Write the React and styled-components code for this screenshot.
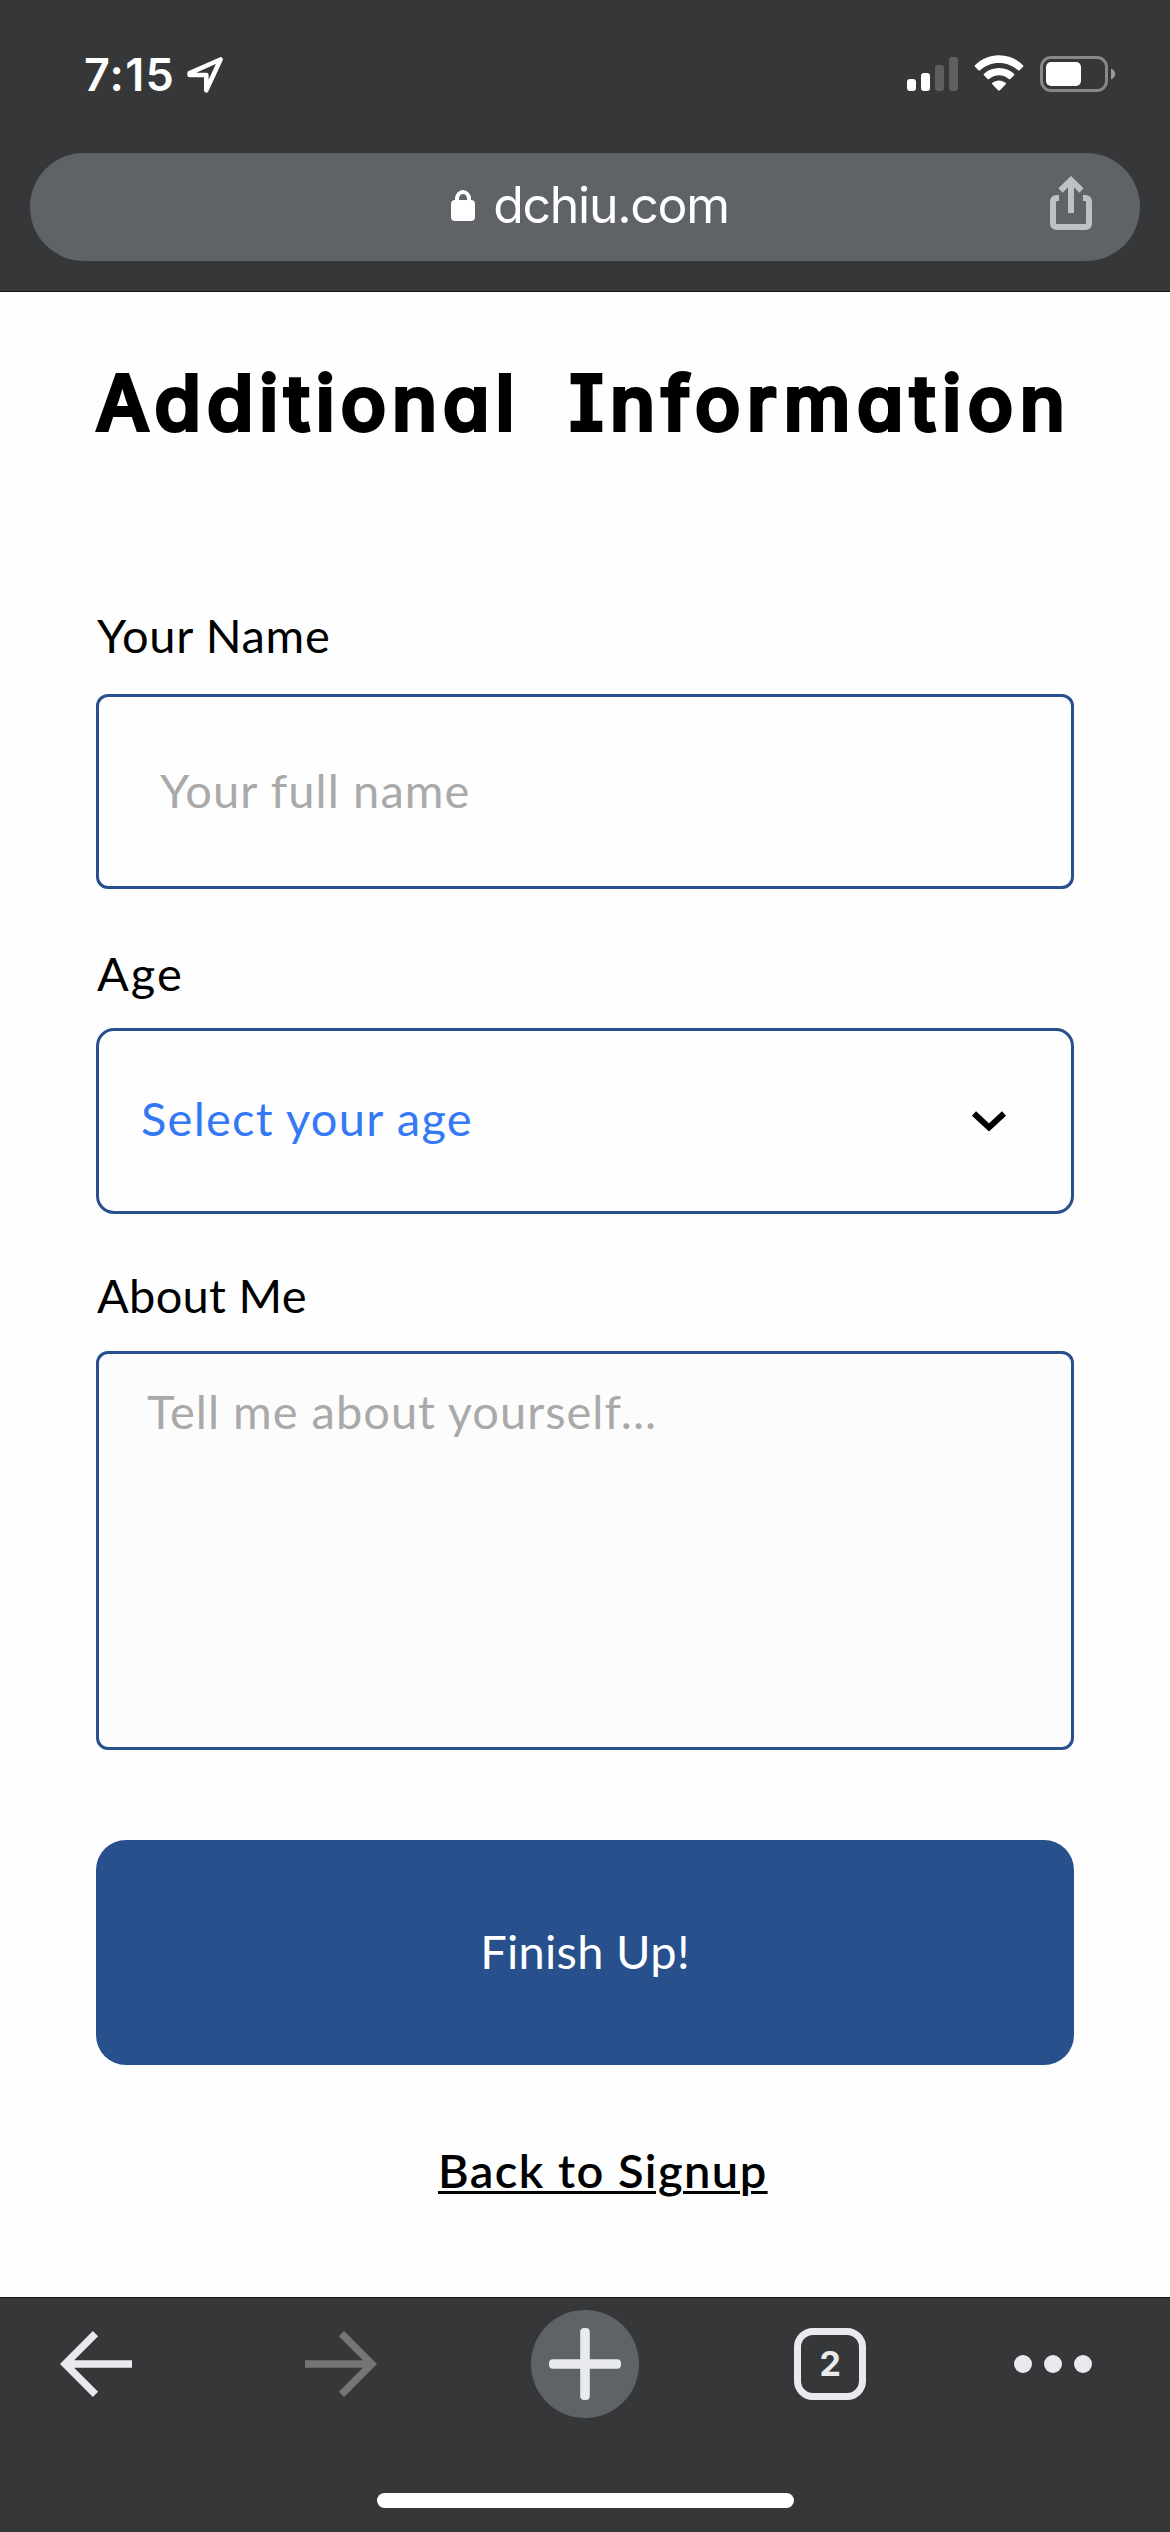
import React from 'react';
import styled, { createGlobalStyle } from 'styled-components';

const Global = createGlobalStyle`
  * { box-sizing: border-box; }
  body { margin: 0; background: #fefefe; }
`;

const bar = '#363739';
const navy = '#27508d';
const body = "Lato, 'Open Sans', sans-serif";
const ui = "Inter, 'Liberation Sans', sans-serif";

const Screen = styled.div`
  display: flex;
  flex-direction: column;
  width: 1170px;
  height: 2532px;
  background: #fefefe;
  color: #000;
  overflow: hidden;
`;

const Header = styled.header`
  flex: none;
  height: 292px;
  background: ${bar};
  border-bottom: 1px solid #17181a;
`;

const StatusBar = styled.div`
  display: flex;
  justify-content: space-between;
  height: 153px;
  padding: 46px 54px 0 84px;
`;

const Clock = styled.div`
  display: flex;
  align-items: center;
  height: 56px;
  font: 600 45px/56px ${ui};
  letter-spacing: 1.2px;
  color: #fff;
`;

const ClockText = styled.span`
  width: 102px;
  padding-top: 1px;
`;

const StatusIcons = styled.div`
  display: flex;
  align-items: center;
  height: 56px;
`;

const AddressPill = styled.div`
  display: grid;
  grid-template-columns: 1fr auto 1fr;
  align-items: center;
  height: 108px;
  margin: 0 30px;
  padding: 0 48px 0 54px;
  border-radius: 54px;
  background: #5f6267;
`;

const Address = styled.div`
  grid-column: 2;
  display: flex;
  align-items: center;
  gap: 18px;
  padding: 0 0 4px 4px;
  font: 400 50px/60px ${ui};
  letter-spacing: -1.3px;
  color: #fff;
`;

const ShareSlot = styled.div`
  display: flex;
  justify-content: flex-end;
  padding-bottom: 8px;
`;

const Main = styled.main`
  flex: 1;
  display: flex;
  flex-direction: column;
  padding: 63px 96px 0;
`;

const Title = styled.h1`
  display: flex;
  justify-content: space-between;
  height: 96px;
  margin: 0 0 154px;
  padding-right: 9px;
  font: 500 75px/96px ${ui};
  font-feature-settings: 'cv11', 'cv08', 'calt' 0;
  -webkit-text-stroke: 4px #000;
  stroke-linejoin: round;
`;

const Word = styled.span`
  letter-spacing: ${(p) => p.$track};
  margin-right: calc(-1 * ${(p) => p.$track});
`;

const Field = styled.div`
  display: flex;
  flex-direction: column;
  gap: ${(p) => p.$gap}px;
  margin-bottom: ${(p) => p.$after}px;
`;

const Label = styled.label`
  height: 60px;
  padding-left: 1px;
  font: 400 47px/60px ${body};
  letter-spacing: ${(p) => p.$track || '0px'};
`;

const TextInput = styled.input`
  height: 195px;
  padding: 0 58px 4px 61px;
  border: 3px solid ${navy};
  border-radius: 12px;
  background: transparent;
  outline: none;
  font: 400 47px/60px ${body};
  letter-spacing: 1.1px;
  &::placeholder { color: #a9a9a9; opacity: 1; }
`;

const Select = styled.button`
  display: flex;
  align-items: center;
  justify-content: space-between;
  height: 186px;
  padding: 0 64px 0 42px;
  border: 3px solid ${navy};
  border-radius: 18px;
  background: transparent;
  font: 400 47px/60px ${body};
  letter-spacing: 1.25px;
  color: #3478f6;
`;

const SelectValue = styled.span`
  padding-bottom: 6px;
`;

const TextArea = styled.textarea`
  height: 399px;
  padding: 27px 48px;
  border: 3px solid ${navy};
  border-radius: 12px;
  background: #fcfcfc;
  outline: none;
  resize: none;
  font: 400 47px/60px ${body};
  letter-spacing: 1px;
  &::placeholder { color: #a9a9a9; opacity: 1; }
`;

const Submit = styled.button`
  height: 225px;
  padding: 0 0 3px;
  border: 0;
  border-radius: 30px;
  background: ${navy};
  font: 400 47px/60px ${body};
  letter-spacing: 0.3px;
  color: #fff;
`;

const BackLink = styled.a`
  align-self: flex-start;
  margin: 75px 0 0 342px;
  font: 600 47px/60px ${body};
  letter-spacing: 1.45px;
  text-decoration: underline;
  text-decoration-thickness: 3px;
  text-underline-offset: 3px;
  color: #000;
`;

const Footer = styled.footer`
  flex: none;
  display: flex;
  flex-direction: column;
  align-items: center;
  justify-content: space-between;
  height: 235px;
  padding: 12px 0 24px;
  border-top: 1px solid #17181a;
  background: ${bar};
`;

const Toolbar = styled.nav`
  display: grid;
  grid-template-columns: 245px 226px 263px 220px 78px;
  align-items: center;
  width: 100%;
  height: 108px;
  padding-left: 60px;
`;

const NewTab = styled.div`
  display: grid;
  place-items: center;
  width: 108px;
  height: 108px;
  border-radius: 50%;
  background: #5f6267;
`;

const TabCount = styled.div`
  display: grid;
  place-items: center;
  width: 72px;
  height: 72px;
  border: 7px solid #e9eaee;
  border-radius: 19px;
  font: 700 34px/40px ${ui};
  letter-spacing: -0.5px;
  color: #e9eaee;
`;

const Dots = styled.div`
  display: flex;
  gap: 12px;
`;

const Dot = styled.span`
  width: 18px;
  height: 18px;
  border-radius: 50%;
  background: #e9eaee;
`;

const HomeBar = styled.div`
  width: 417px;
  height: 15px;
  border-radius: 8px;
  background: #fff;
`;

const LocationIcon = () => (
  <svg width="38" height="38" viewBox="0 0 38 38" fill="none" stroke="#fff" strokeWidth="4.600" strokeLinejoin="round">
    <path d="M3.600 18.200 34.500 4.500 20.300 35.300V20H3.600Z" />
  </svg>
);

const SignalIcon = () => (
  <svg width="51" height="36" viewBox="0 0 51 36">
    <rect x="0" y="23" width="9" height="12" rx="3" fill="#fff" />
    <rect x="14" y="17" width="9" height="18" rx="3" fill="#fff" />
    <rect x="28" y="9" width="9" height="26" rx="3" fill="#5e5f61" />
    <rect x="42" y="1" width="9" height="34" rx="3" fill="#5e5f61" />
  </svg>
);

const WifiIcon = () => (
  <svg width="50" height="38" viewBox="0 0 50 38" fill="#fff">
    <path d="M25 .3C34.300 .3 42.700 4 49 10.200c.5.500.5 1 0 1.500l-3.500 3.600c-.5.500-1 .5-1.500 0C38.900 10.500 32.300 7.900 25 7.900S11.100 10.500 6 15.300c-.5.500-1 .5-1.500 0L1 11.700c-.5-.5-.5-1 0-1.500C7.300 4 15.700.3 25 .3Z" />
    <path d="M25 13c5.800 0 11 2.200 15 5.800.5.500.5 1 .1 1.500l-3.700 3.700c-.5.500-1 .5-1.500.1C32.200 21.700 28.800 20.300 25 20.300s-7.200 1.400-9.900 3.800c-.5.400-1 .4-1.500-.1l-3.700-3.700c-.4-.5-.4-1 .1-1.500 4-3.600 9.200-5.800 15-5.800Z" />
    <path d="M25 25.400c2.500 0 4.800.9 6.600 2.400.5.400.5.900.1 1.400L25.900 35.200c-.5.600-1.300.6-1.800 0L18.300 29.200c-.4-.5-.4-1 .1-1.400 1.800-1.500 4.100-2.400 6.600-2.400Z" />
  </svg>
);

const BatteryIcon = () => (
  <svg width="76" height="36" viewBox="0 0 76 36">
    <rect x="1.500" y="1.500" width="65" height="33" rx="9.500" fill="none" stroke="#868789" strokeWidth="3" />
    <rect x="6" y="6" width="35" height="24" rx="5" fill="#fff" />
    <path d="M71 12.500c2.600 1 4.200 3.100 4.200 5.500S73.600 22.500 71 23.500Z" fill="#98999b" />
  </svg>
);

const Spacer = styled.span`
  width: ${(p) => p.$w}px;
`;

const LockIcon = () => (
  <svg width="24" height="31" viewBox="0 0 24 31">
    <path d="M6 13V8.800a6 6.800 0 0 1 12 0V13" fill="none" stroke="#fff" strokeWidth="4" />
    <rect x="0" y="10" width="24" height="21" rx="4" fill="#fff" />
  </svg>
);

const ShareIcon = () => (
  <svg width="42" height="54" viewBox="0 0 42 54" fill="none" stroke="#bdc0c5" strokeWidth="6">
    <path d="M21 37V5M10.500 14.500 21 4.200 31.500 14.500" />
    <path d="M9 22H7q-4 0-4 4V47q0 4 4 4H35q4 0 4-4V26q0-4-4-4H33" />
  </svg>
);

const ArrowIcon = ({ forward }) => (
  <svg
    width="72"
    height="66"
    viewBox="0 0 72 66"
    fill="none"
    stroke={forward ? '#747577' : '#e9eaee'}
    strokeWidth="7.400"
    transform={forward ? 'scale(-1 1)' : undefined}
  >
    <path d="M72 33H7M35.500 2.600 5.200 33 35.500 63.400" />
  </svg>
);

const PlusIcon = () => (
  <svg width="72" height="72" viewBox="0 0 72 72" fill="#e9eaee">
    <rect x="31.200" y="0" width="9.600" height="72" rx="4" />
    <rect x="0" y="31.200" width="72" height="9.600" rx="4" />
  </svg>
);

const ChevronIcon = () => (
  <svg width="36" height="24" viewBox="0 0 36 24" fill="none" stroke="#000" strokeWidth="6">
    <path d="M3 4.500 18 18.500 33 4.500" />
  </svg>
);

export default function App() {
  return (
    <Screen>
      <Global />
      <Header>
        <StatusBar>
          <Clock>
            <ClockText>7:15</ClockText>
            <LocationIcon />
          </Clock>
          <StatusIcons>
            <SignalIcon />
            <Spacer $w={16} />
            <WifiIcon />
            <Spacer $w={16} />
            <BatteryIcon />
          </StatusIcons>
        </StatusBar>
        <AddressPill>
          <Address>
            <LockIcon />
            <span>dchiu.com</span>
          </Address>
          <ShareSlot>
            <ShareIcon />
          </ShareSlot>
        </AddressPill>
      </Header>
      <Main>
        <Title>
          <Word $track="6px">Additional</Word>
          <Word $track="6.7px">Information</Word>
        </Title>
        <Field $gap={29} $after={54}>
          <Label htmlFor="name" $track="0.7px">Your Name</Label>
          <TextInput id="name" placeholder="Your full name" />
        </Field>
        <Field $gap={25} $after={51}>
          <Label $track="2px">Age</Label>
          <Select>
            <SelectValue>Select your age</SelectValue>
            <ChevronIcon />
          </Select>
        </Field>
        <Field $gap={26} $after={90}>
          <Label htmlFor="about" $track="0.3px">About Me</Label>
          <TextArea id="about" placeholder="Tell me about yourself..." />
        </Field>
        <Submit>Finish Up!</Submit>
        <BackLink>Back to Signup</BackLink>
      </Main>
      <Footer>
        <Toolbar>
          <ArrowIcon />
          <ArrowIcon forward />
          <NewTab>
            <PlusIcon />
          </NewTab>
          <TabCount>2</TabCount>
          <Dots>
            <Dot />
            <Dot />
            <Dot />
          </Dots>
        </Toolbar>
        <HomeBar />
      </Footer>
    </Screen>
  );
}
